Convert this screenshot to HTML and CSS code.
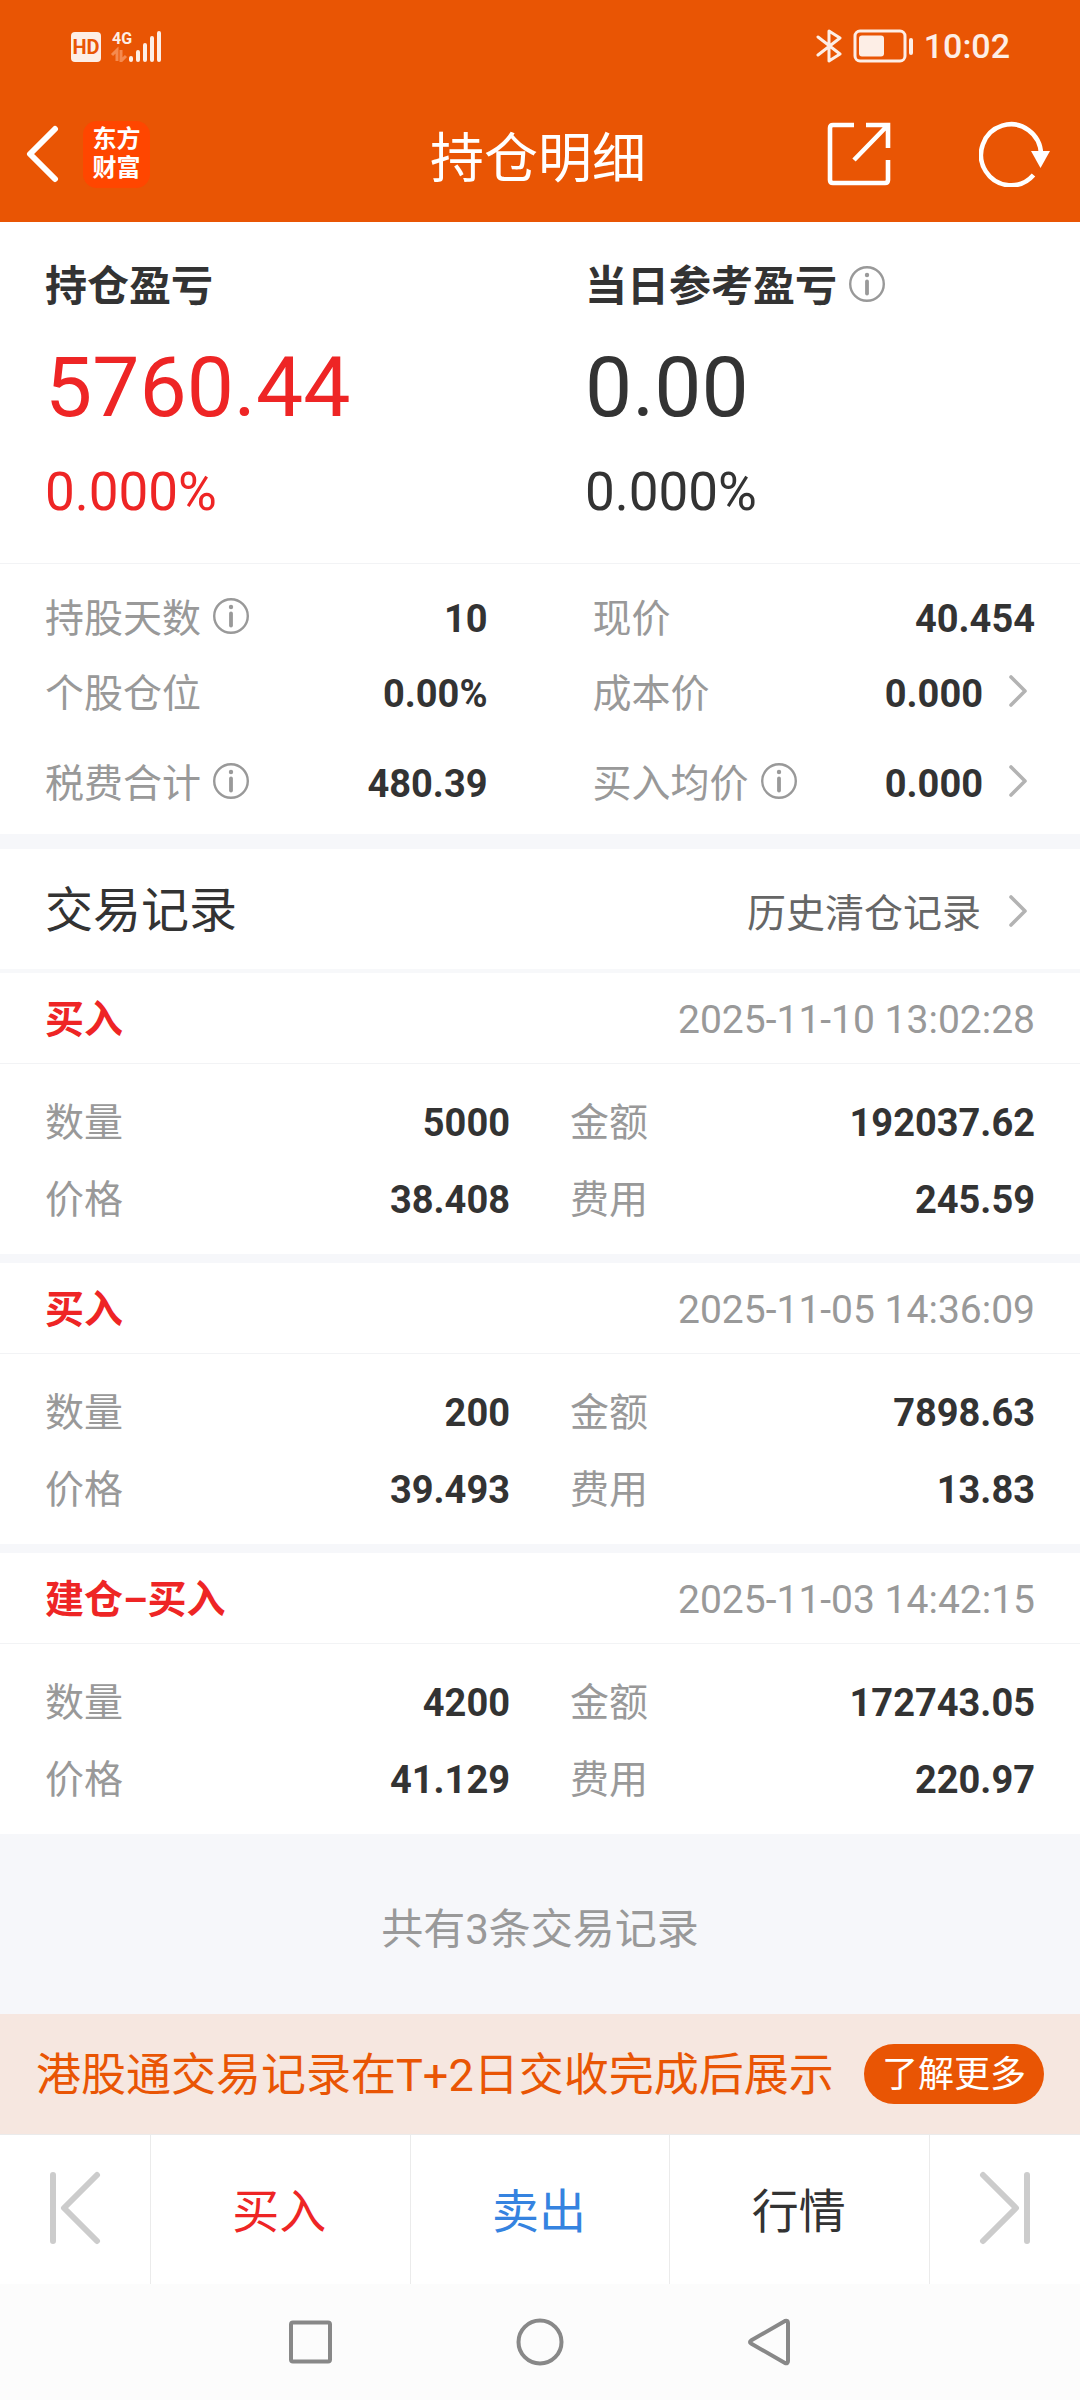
FILE: index.html
```html
<!DOCTYPE html>
<html lang="zh-CN">
<head>
<meta charset="utf-8">
<meta name="viewport" content="width=device-width, initial-scale=1">
<title>持仓明细</title>
<link rel="stylesheet" href="styles.css">
</head>
<body>
<svg class="sprite" aria-hidden="true">
  <symbol id="info" viewBox="0 0 36 36">
    <circle cx="18" cy="18" r="16.800" fill="none" stroke="currentColor" stroke-width="2.400"/>
    <circle cx="18" cy="9" r="2.200" fill="currentColor"/>
    <path d="M18 15.500V27.500" stroke="currentColor" stroke-width="3.800" stroke-linecap="round"/>
  </symbol>
  <symbol id="chevron" viewBox="0 0 18 32">
    <path d="M2 2L16 16L2 30" fill="none" stroke="currentColor" stroke-width="3.600" stroke-linecap="round" stroke-linejoin="round"/>
  </symbol>
</svg>

<header class="top">
  <div class="status">
    <div class="status-group">
      <svg width="90" height="32" viewBox="0 0 90 32" role="img" aria-label="HD 4G">
        <rect x="0" y="2" width="30" height="30" rx="4" fill="#fdeee6"/>
        <text class="hd-text" x="15" y="24" text-anchor="middle" fill="#e95504">HD</text>
        <text class="net-text" x="41" y="14" fill="#fdeee6">4G</text>
        <path d="M46 31V20L41 25M50 20V31L55 26" fill="none" stroke="#f58a4e" stroke-width="3"/>
        <path d="M60 28V30M67 22V30M74 15V30M81 8V30M88 3V30" stroke="#fdeee6" stroke-width="4" stroke-linecap="round"/>
      </svg>
    </div>
    <div class="status-group">
      <svg width="98" height="34" viewBox="0 0 98 34" role="img" aria-label="蓝牙 电量">
        <path d="M2 8L24 25L13 32V2L24 9L2 26" fill="none" stroke="#fdeee6" stroke-width="3" stroke-linejoin="round" stroke-linecap="round"/>
        <rect x="39" y="2" width="50" height="30" rx="5" fill="none" stroke="#fdeee6" stroke-width="3"/>
        <rect x="43" y="6.500" width="25" height="21" rx="3" fill="#fdeee6"/>
        <path d="M95 11V24" stroke="#fdeee6" stroke-width="4" stroke-linecap="round"/>
      </svg>
      <time class="clock">10:02</time>
    </div>
  </div>
  <div class="navbar">
    <div class="nav-left">
      <button class="icon-button" type="button" aria-label="返回">
        <svg width="34" height="58" viewBox="0 0 34 58"><path d="M30 4L5 29L30 54" fill="none" stroke="#fff" stroke-width="6" stroke-linecap="round" stroke-linejoin="round"/></svg>
      </button>
      <div class="logo"><span>东方</span><span>财富</span></div>
    </div>
    <h1 class="title">持仓明细</h1>
    <div class="nav-right">
      <button class="icon-button" type="button" aria-label="分享">
        <svg width="64" height="64" viewBox="0 0 64 64"><path d="M27 3H6Q3 3 3 6V58Q3 61 6 61H58Q61 61 61 58V38M39 3H61V26M61 3L27 38" fill="none" stroke="#fff" stroke-width="4.600"/></svg>
      </button>
      <button class="icon-button" type="button" aria-label="刷新">
        <svg width="72" height="66" viewBox="0 0 72 66"><path d="M54.500 54A30 30.500 0 1 1 62 33" fill="none" stroke="#fff" stroke-width="4.600"/><path d="M52 30H71L61.500 47Z" fill="#fff"/></svg>
      </button>
    </div>
  </div>
</header>

<main>
  <section class="summary">
    <div class="profit">
      <h2 class="profit-label">持仓盈亏</h2>
      <p class="profit-value up">5760.44</p>
      <p class="profit-rate up">0.000%</p>
    </div>
    <div class="profit">
      <h2 class="profit-label">当日参考盈亏<svg class="info"><use href="#info"/></svg></h2>
      <p class="profit-value">0.00</p>
      <p class="profit-rate">0.000%</p>
    </div>
  </section>

  <dl class="stats">
    <div class="pair"><dt>持股天数<svg class="info"><use href="#info"/></svg></dt><dd>10</dd></div>
    <div class="pair"><dt>现价</dt><dd>40.454</dd></div>
    <div class="pair"><dt>个股仓位</dt><dd>0.00%</dd></div>
    <div class="pair"><dt>成本价</dt><dd>0.000<svg class="chevron"><use href="#chevron"/></svg></dd></div>
    <div class="pair spaced"><dt>税费合计<svg class="info"><use href="#info"/></svg></dt><dd>480.39</dd></div>
    <div class="pair spaced"><dt>买入均价<svg class="info"><use href="#info"/></svg></dt><dd>0.000<svg class="chevron"><use href="#chevron"/></svg></dd></div>
  </dl>

  <section class="records">
    <div class="records-head">
      <h2>交易记录</h2>
      <a href="#history">历史清仓记录<svg class="chevron"><use href="#chevron"/></svg></a>
    </div>
    <article class="record">
      <div class="record-head"><h3>买入</h3><time>2025-11-10 13:02:28</time></div>
      <dl class="record-body">
        <div class="pair"><dt>数量</dt><dd>5000</dd></div>
        <div class="pair"><dt>金额</dt><dd>192037.62</dd></div>
        <div class="pair"><dt>价格</dt><dd>38.408</dd></div>
        <div class="pair"><dt>费用</dt><dd>245.59</dd></div>
      </dl>
    </article>
    <article class="record">
      <div class="record-head"><h3>买入</h3><time>2025-11-05 14:36:09</time></div>
      <dl class="record-body">
        <div class="pair"><dt>数量</dt><dd>200</dd></div>
        <div class="pair"><dt>金额</dt><dd>7898.63</dd></div>
        <div class="pair"><dt>价格</dt><dd>39.493</dd></div>
        <div class="pair"><dt>费用</dt><dd>13.83</dd></div>
      </dl>
    </article>
    <article class="record">
      <div class="record-head"><h3>建仓–买入</h3><time>2025-11-03 14:42:15</time></div>
      <dl class="record-body">
        <div class="pair"><dt>数量</dt><dd>4200</dd></div>
        <div class="pair"><dt>金额</dt><dd>172743.05</dd></div>
        <div class="pair"><dt>价格</dt><dd>41.129</dd></div>
        <div class="pair"><dt>费用</dt><dd>220.97</dd></div>
      </dl>
    </article>
  </section>
  <p class="total">共有3条交易记录</p>
</main>

<footer>
  <div class="notice">
    <p>港股通交易记录在T+2日交收完成后展示</p>
    <button class="more" type="button">了解更多</button>
  </div>
  <div class="actions">
    <button class="step" type="button" aria-label="上一个"><svg width="52" height="74" viewBox="0 0 52 74"><path d="M4 4V70M48 4L15 37L48 70" fill="none" stroke="#ccc" stroke-width="6" stroke-linecap="round" stroke-linejoin="round"/></svg></button>
    <button class="buy" type="button">买入</button>
    <button class="sell" type="button">卖出</button>
    <button type="button">行情</button>
    <button class="step" type="button" aria-label="下一个"><svg width="52" height="74" viewBox="0 0 52 74"><path d="M48 4V70M4 4L37 37L4 70" fill="none" stroke="#ccc" stroke-width="6" stroke-linecap="round" stroke-linejoin="round"/></svg></button>
  </div>
  <nav class="system-nav">
    <button class="icon-button" type="button" aria-label="最近任务"><svg width="48" height="48" viewBox="0 0 48 48"><rect x="5" y="4.500" width="39" height="39" rx="2" fill="none" stroke="#888" stroke-width="4"/></svg></button>
    <button class="icon-button" type="button" aria-label="主屏幕"><svg width="48" height="48" viewBox="0 0 48 48"><circle cx="24" cy="24" r="21.500" fill="none" stroke="#888" stroke-width="4"/></svg></button>
    <button class="icon-button" type="button" aria-label="返回"><svg width="48" height="48" viewBox="0 0 48 48"><path d="M5 22.500L39 3Q42 2 42 5V43Q42 46 39 45L5 25.500Q3 24 5 22.500Z" fill="none" stroke="#888" stroke-width="4" stroke-linejoin="round"/></svg></button>
  </nav>
</footer>
</body>
</html>
```

FILE: styles.css
```css
* { box-sizing: border-box; }

body {
  margin: 0;
  min-height: 100vh;
  display: flex;
  flex-direction: column;
  background: #f6f7fa;
  color: #333;
  font: 39px/48px Roboto, "Noto Sans CJK SC", sans-serif;
}

main { flex: 1; }

h1, h2, h3, p, dl, dd { margin: 0; }

button {
  margin: 0;
  padding: 0;
  border: 0;
  background: none;
  color: inherit;
  font: inherit;
}

svg { display: block; flex: none; }

.sprite { position: absolute; width: 0; height: 0; }

.info { width: 36px; height: 36px; margin: 0 0 6px 12px; color: #999; }

.chevron { width: 18px; height: 32px; margin: 0 8px 6px 26px; color: #b3b3b3; }

.up { color: #ee2525; }

/* Header */
.top { background: #e95504; color: #fff; }

.status {
  display: flex;
  justify-content: space-between;
  align-items: center;
  height: 92px;
  padding: 0 70px 0 71px;
}

.status-group { display: flex; align-items: center; gap: 10px; }

.hd-text { font: 700 20px Roboto, sans-serif; }

.net-text { font: 700 16px Roboto, sans-serif; }

.clock { color: #fdeee6; font-size: 34px; font-weight: 500; line-height: 40px; }

.navbar {
  display: grid;
  grid-template-columns: 1fr auto 1fr;
  align-items: center;
  height: 130px;
  padding: 0 29px 6px 25px;
}

.nav-left { display: flex; align-items: center; gap: 24px; }

.nav-right { display: flex; align-items: center; justify-content: flex-end; gap: 88px; }

.icon-button { display: block; }

.logo {
  display: flex;
  flex-direction: column;
  align-items: center;
  justify-content: center;
  width: 67px;
  height: 67px;
  border-radius: 14px;
  background: #ff4600;
  font-size: 24px;
  font-weight: 700;
  line-height: 29px;
}

.title { padding-top: 12px; font-size: 54px; font-weight: 400; line-height: 64px; }

/* Profit summary */
.summary {
  display: grid;
  grid-template-columns: 1fr 1fr;
  padding: 41px 0 36px;
  border-bottom: 1px solid #f2f3f5;
  background: #fff;
}

.profit { padding: 0 45px; }

.profit-label {
  display: flex;
  align-items: center;
  font-size: 42px;
  font-weight: 700;
  line-height: 48px;
}

.profit-value { margin-top: 29px; font-size: 84px; line-height: 96px; }

.profit-rate { margin-top: 22px; font-size: 53px; line-height: 69px; }

/* Label and value pairs */
.pair { display: flex; justify-content: space-between; align-items: center; }

.pair dt { display: flex; align-items: center; color: #999; }

.pair dd { display: flex; align-items: center; font-size: 38px; font-weight: 700; }

.stats {
  display: grid;
  grid-template-columns: 1fr 1fr;
  gap: 27px 105px;
  padding: 31px 45px 26px;
  border-bottom: 15px solid #f6f7fa;
  background: #fff;
}

.spaced { margin-top: 15px; }

/* Trade records */
.records-head {
  display: flex;
  justify-content: space-between;
  align-items: center;
  height: 124px;
  padding: 4px 45px 0;
  border-bottom: 4px solid #f7f8fa;
  background: #fff;
}

.records-head h2 { font-size: 48px; font-weight: 400; }

.records-head a {
  display: flex;
  align-items: center;
  gap: 2px;
  padding-top: 6px;
  color: #666;
  text-decoration: none;
}

.record { background: #fff; }

.record + .record { border-top: 9px solid #f6f7fa; }

.record-head {
  display: flex;
  justify-content: space-between;
  align-items: center;
  padding: 23px 45px 19px;
  border-bottom: 1px solid #f2f3f5;
}

.record-head h3 { color: #ee2525; font-size: 39px; font-weight: 700; }

.record-head time { color: #999; }

.record-body {
  display: grid;
  grid-template-columns: 1fr 1fr;
  gap: 29px 60px;
  padding: 35px 45px 30px;
}

.total {
  padding: 72px 0 60px;
  color: #999;
  font-size: 42px;
  text-align: center;
}

/* Bottom area */
.notice {
  display: flex;
  justify-content: space-between;
  align-items: center;
  padding: 30px 36px;
  background: #f6e7e0;
  color: #e95504;
  font-size: 45px;
}

.notice p { padding-top: 4px; line-height: 56px; }

.more {
  width: 180px;
  height: 60px;
  padding-top: 2px;
  border-radius: 30px;
  background: #e95504;
  color: #fff;
  font-size: 36px;
  line-height: 56px;
}

.actions {
  display: grid;
  grid-template-columns: 150px 1fr 1fr 1fr 151px;
  height: 150px;
  border-top: 1px solid #ebebeb;
  background: #fff;
  font-size: 47px;
}

.actions button {
  display: flex;
  align-items: center;
  justify-content: center;
  padding: 4px 2px 0 0;
}

.actions .step { padding: 0 0 4px; }

.actions button + button { border-left: 1px solid #ebebeb; }

.buy { color: #ee2525; }

.sell { color: #3583e0; }

.system-nav {
  display: flex;
  justify-content: center;
  align-items: center;
  gap: 182px;
  height: 116px;
  background: #fcfcfc;
}
```
